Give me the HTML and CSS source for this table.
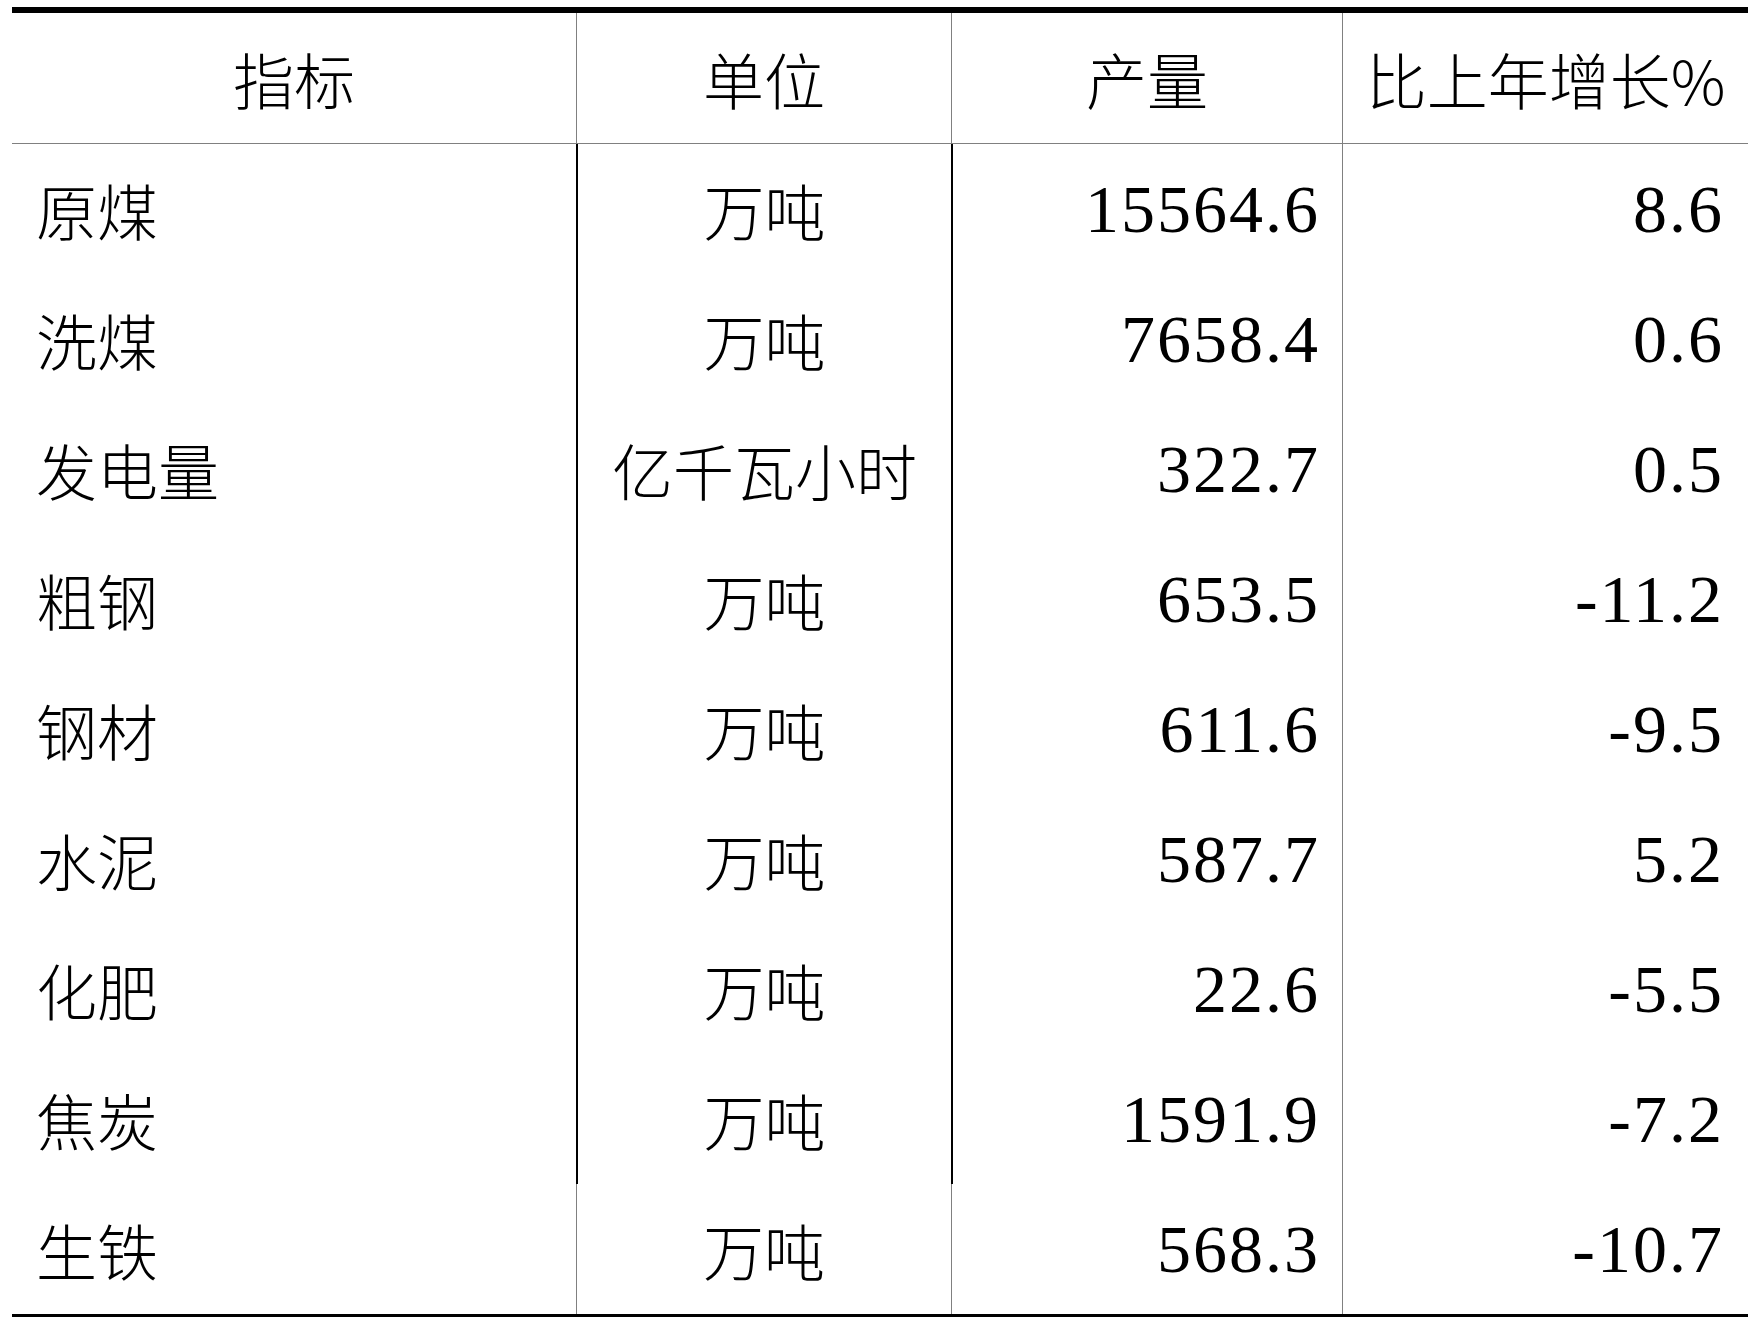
FILE: index.html
```html
<!DOCTYPE html>
<html lang="zh-CN">
<head>
<meta charset="utf-8">
<title>主要工业产品产量</title>
<link rel="stylesheet" href="styles.css">
</head>
<body>
<div class="page">
<table class="stats">
  <colgroup>
    <col class="c1"><col class="c2"><col class="c3"><col class="c4">
  </colgroup>
  <thead>
    <tr>
      <th class="cn">指标</th>
      <th class="cn">单位</th>
      <th class="cn">产量</th>
      <th class="cn">比上年增长%</th>
    </tr>
  </thead>
  <tbody>
    <tr><td class="name">原煤</td><td class="unit">万吨</td><td class="num">15564.6</td><td class="num">8.6</td></tr>
    <tr><td class="name">洗煤</td><td class="unit">万吨</td><td class="num">7658.4</td><td class="num">0.6</td></tr>
    <tr><td class="name">发电量</td><td class="unit">亿千瓦小时</td><td class="num">322.7</td><td class="num">0.5</td></tr>
    <tr><td class="name">粗钢</td><td class="unit">万吨</td><td class="num">653.5</td><td class="num">-11.2</td></tr>
    <tr><td class="name">钢材</td><td class="unit">万吨</td><td class="num">611.6</td><td class="num">-9.5</td></tr>
    <tr><td class="name">水泥</td><td class="unit">万吨</td><td class="num">587.7</td><td class="num">5.2</td></tr>
    <tr><td class="name">化肥</td><td class="unit">万吨</td><td class="num">22.6</td><td class="num">-5.5</td></tr>
    <tr><td class="name">焦炭</td><td class="unit">万吨</td><td class="num">1591.9</td><td class="num">-7.2</td></tr>
    <tr class="last"><td class="name">生铁</td><td class="unit">万吨</td><td class="num">568.3</td><td class="num">-10.7</td></tr>
  </tbody>
</table>
</div>
</body>
</html>
```
FILE: styles.css
```css
html, body {
  margin: 0;
  padding: 0;
  background: #ffffff;
}
.page {
  padding: 7px 0 0 12px;
}
.stats {
  width: 1736px;
  table-layout: fixed;
  border-collapse: separate;
  border-spacing: 0;
  border-top: 6px solid #000;
  border-bottom: 3px solid #000;
  color: #000;
}
.c1 { width: 564px; }
.c2 { width: 375px; }
.c3 { width: 391px; }
.c4 { width: 406px; }

.stats th,
.stats td {
  padding: 0;
  vertical-align: middle;
  white-space: nowrap;
}
.stats thead tr { height: 131px; }
.stats tbody tr { height: 130px; }

.stats th {
  font-family: "Noto Sans CJK SC", sans-serif;
  font-weight: 300;
  font-size: 61px;
  text-align: center;
  border-bottom: 1px solid #808080;
}
.stats th + th {
  border-left: 1px solid #808080;
}

.name {
  font-family: "Noto Sans CJK SC", sans-serif;
  font-weight: 300;
  font-size: 61px;
  text-align: left;
  padding-left: 24px !important;
}
.unit {
  font-family: "Noto Sans CJK SC", sans-serif;
  font-weight: 300;
  font-size: 61px;
  text-align: center;
  border-left: 2px solid #000;
}
.num {
  font-family: "Liberation Serif", serif;
  font-size: 68px;
  letter-spacing: 2px;
  text-align: right;
  padding-right: 22px !important;
}
.unit + .num {
  border-left: 2px solid #000;
}
.num + .num {
  border-left: 1px solid #808080;
  padding-right: 24px !important;
}
.last .unit,
.last .unit + .num {
  border-left: 1px solid #808080;
}
```
